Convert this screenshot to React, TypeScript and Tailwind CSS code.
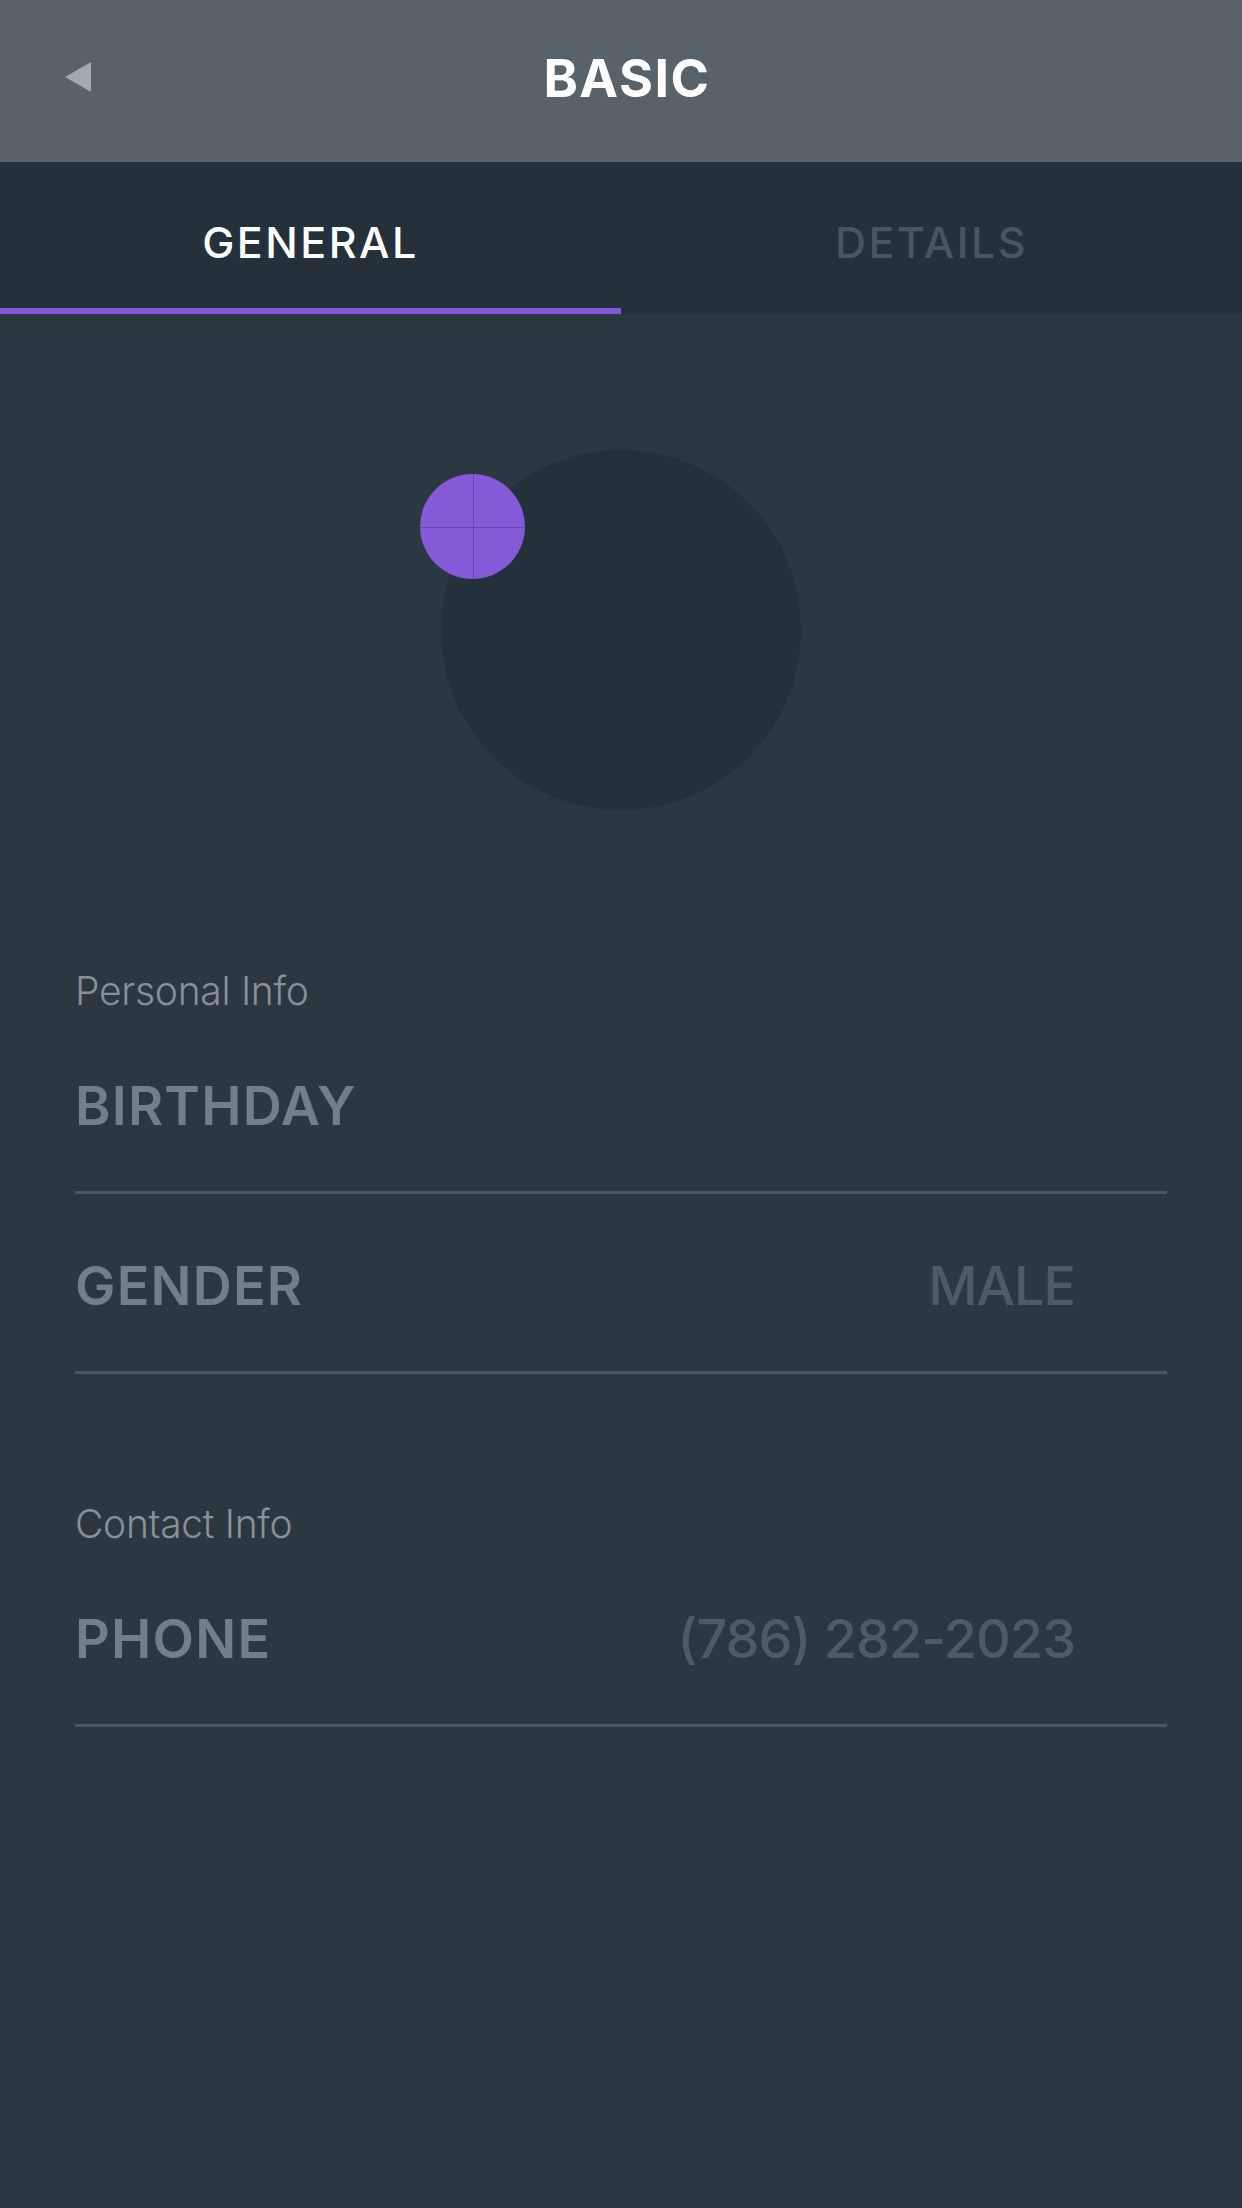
import { useState } from 'react';

type Row = {
  label: string;
  value?: string;
};

const sections: { title: string; rows: Row[]; gap: string }[] = [
  {
    title: 'Personal Info',
    gap: 'mt-[161px]',
    rows: [{ label: 'BIRTHDAY' }, { label: 'GENDER', value: 'MALE' }],
  },
  {
    title: 'Contact Info',
    gap: 'mt-[130px]',
    rows: [{ label: 'PHONE', value: '(786) 282-2023' }],
  },
];

function InfoRow({ label, value }: Row) {
  return (
    <div className="flex flex-col">
      <div className="h-[177px] flex items-center justify-between pt-[7px] pr-[92px]">
        <span className="text-[54px] leading-none font-semibold text-[#737e87] tracking-[1.2px]">
          {label}
        </span>
        {value && (
          <span className="text-[54px] leading-none font-medium text-[#4f5b64] tracking-[-1px]">
            {value}
          </span>
        )}
      </div>
      <div className="h-[3px] bg-[#4b5760]" />
    </div>
  );
}

export default function App() {
  const [tab, setTab] = useState<'general' | 'details'>('general');

  return (
    <div
      className="min-h-[2208px] w-full flex flex-col bg-[#2c3841]"
      style={{ fontFamily: 'Inter, "Noto Sans", sans-serif' }}
    >
      {/* header */}
      <div className="h-[162px] bg-[#57626a] flex items-center justify-center relative pb-1 pl-[12px]">
        <button className="absolute left-[65px] top-[62px]">
          <svg width="26" height="30" viewBox="0 0 26 30">
            <polygon points="26,0 26,30 0,15" fill="#a3a9ae" />
          </svg>
        </button>
        <h1 className="text-[52px] font-bold text-white tracking-[1.5px]">BASIC</h1>
      </div>

      {/* tabs */}
      <div className="flex bg-[#24303a]">
        {(['general', 'details'] as const).map((t) => (
          <button
            key={t}
            onClick={() => setTab(t)}
            className="flex-1 flex flex-col"
          >
            <div
              className={`h-[146px] flex items-center justify-center pt-[15px] text-[43px] tracking-[2.5px] font-medium ${
                tab === t ? 'text-white' : 'text-[#4a555e]'
              }`}
            >
              {t.toUpperCase()}
            </div>
            <div className={`h-[6px] ${tab === t ? 'bg-[#8259d8]' : 'bg-[#24303a]'}`} />
          </button>
        ))}
      </div>

      {/* avatar */}
      <div className="flex justify-center mt-[136px]">
        <div className="relative w-[360px] h-[360px] rounded-full bg-[#24303a]">
          <div className="absolute left-[-21px] top-[24px] w-[105px] h-[105px] rounded-full bg-[#845ad9] overflow-hidden">
            <div className="absolute left-1/2 top-0 bottom-0 w-px bg-[#6a46b0]" />
            <div className="absolute top-1/2 left-0 right-0 h-px bg-[#6a46b0]" />
          </div>
        </div>
      </div>

      {/* info sections */}
      <div className="px-[75px] flex flex-col">
        {sections.map((s) => (
          <div key={s.title} className={`flex flex-col ${s.gap}`}>
            <div className="h-[39px] mb-[4px] text-[39px] leading-none font-light text-[#87919a] tracking-[-0.3px]">
              {s.title}
            </div>
            {s.rows.map((r) => (
              <InfoRow key={r.label} {...r} />
            ))}
          </div>
        ))}
      </div>
    </div>
  );
}
